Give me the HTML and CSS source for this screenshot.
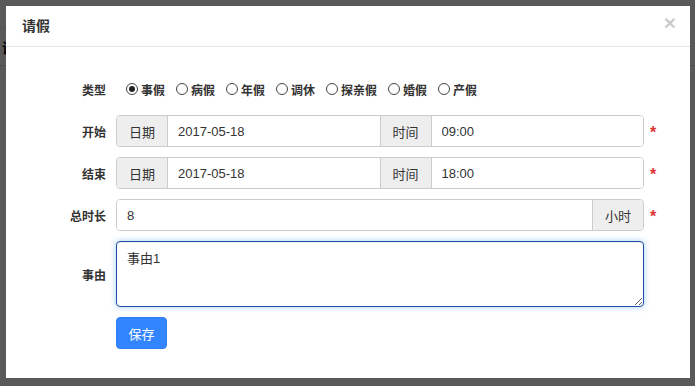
FILE: index.html
```html
<!DOCTYPE html>
<html>
  <head>
    <title>请假</title>
    <link rel="stylesheet" href="styles.css">
    <meta name="viewport" content="width=device-width, initial-scale=1" />
  </head>
  <body>
    <div class="page">
      <div class="page-bar"><span class="page-title">请假管理</span></div>
    </div>
    <div class="backdrop"></div>
    <div class="modal">
      <div class="modal-header">
        <h4 class="modal-title">请假</h4>
        <button type="button" class="close">&times;</button>
      </div>
      <div class="modal-body">
        <form class="form">
          <div class="row">
            <span class="label">类型</span>
            <div class="radios">
              <label class="radio"><input type="radio" name="type" checked />事假</label>
              <label class="radio"><input type="radio" name="type" />病假</label>
              <label class="radio"><input type="radio" name="type" />年假</label>
              <label class="radio"><input type="radio" name="type" />调休</label>
              <label class="radio"><input type="radio" name="type" />探亲假</label>
              <label class="radio"><input type="radio" name="type" />婚假</label>
              <label class="radio"><input type="radio" name="type" />产假</label>
            </div>
          </div>
          <div class="row">
            <span class="label">开始</span>
            <div class="group">
              <span class="addon">日期</span>
              <input class="input" type="text" value="2017-05-18" />
              <span class="addon addon-mid">时间</span>
              <input class="input" type="text" value="09:00" />
            </div>
            <span class="required">*</span>
          </div>
          <div class="row">
            <span class="label">结束</span>
            <div class="group">
              <span class="addon">日期</span>
              <input class="input" type="text" value="2017-05-18" />
              <span class="addon addon-mid">时间</span>
              <input class="input" type="text" value="18:00" />
            </div>
            <span class="required">*</span>
          </div>
          <div class="row">
            <span class="label">总时长</span>
            <div class="group">
              <input class="input" type="text" value="8" />
              <span class="addon addon-end">小时</span>
            </div>
            <span class="required">*</span>
          </div>
          <div class="row row-text">
            <span class="label">事由</span>
            <textarea class="textarea">事由1</textarea>
          </div>
          <div class="row">
            <span class="label"></span>
            <button type="button" class="btn">保存</button>
          </div>
        </form>
      </div>
    </div>
  </body>
</html>
```

FILE: styles.css
```css
body {margin: 0; background-color: #fff; font-family: "Liberation Sans", "Noto Sans CJK SC", sans-serif; color: #333;}
.page {height: 386px; padding-top: 27px; box-sizing: border-box; overflow: hidden;}
.page-bar {height: 37px; border-top: 1px solid #eee; border-bottom: 1px solid #ddd; display: flex; align-items: center;}
.page-title {padding-left: 2px; font-size: 14px; font-weight: bold; color: #000;}
.backdrop {position: fixed; left: 0; top: 0; right: 0; bottom: 0; background-color: rgba(0, 0, 0, 0.65);}
.modal {position: fixed; left: 6px; top: 6px; width: 684px; height: 372px; background-color: #fff;}
.modal-header {height: 40px; padding: 0 16px 0 16px; border-bottom: 1px solid #e5e5e5; display: flex; align-items: center; justify-content: space-between;}
.modal-title {margin: 0; font-size: 14px; font-weight: bold; line-height: 20px; color: #333;}
.close {border: 0; padding: 0; background: none; font-family: "Liberation Sans", sans-serif; font-size: 21px; font-weight: bold; line-height: 20px; color: #000; opacity: 0.2; margin-top: -6px; margin-right: -2px;}
.modal-body {padding-top: 26px;}
.row {display: flex; align-items: center; height: 32px; margin-bottom: 10px;}
.row-text {height: 66px; margin-bottom: 10px;}
.label {width: 100px; padding-right: 10px; text-align: right; font-size: 12px; font-weight: bold; flex-shrink: 0;}
.radios {display: flex; align-items: center; padding-left: 10px;}
.radio {display: flex; align-items: center; font-size: 12px; font-weight: bold; margin-right: 11px;}
.radio input {appearance: none; -webkit-appearance: none; margin: 0 3px 0 0; width: 12px; height: 12px; border: 1px solid #444; border-radius: 50%; background: #fff; display: grid; place-items: center;}
.radio input:checked::before {content: ""; width: 6px; height: 6px; border-radius: 50%; background: #222;}
.group {display: flex; width: 528px; height: 32px; box-sizing: border-box; border: 1px solid #ccc; border-radius: 4px; overflow: hidden;}
.addon {width: 50px; flex-shrink: 0; background-color: #eee; border-right: 1px solid #ccc; color: #333; font-size: 13px; display: flex; align-items: center; justify-content: center;}
.addon-mid {border-left: 1px solid #ccc;}
.addon-end {border-left: 1px solid #ccc; border-right: 0;}
.input {flex: 1; min-width: 0; border: 0; padding: 0 10px; font-family: "Liberation Sans", "Noto Sans CJK SC", sans-serif; font-size: 13px; color: #333; outline: none;}
.required {margin-left: 6px; color: #dd3333; font-size: 16px; font-weight: bold; line-height: 16px; padding-top: 4px;}
.textarea {width: 528px; height: 66px; box-sizing: border-box; border: 1px solid #1f4fa6; border-radius: 4px; padding: 6px 10px; font-family: "Liberation Sans", "Noto Sans CJK SC", sans-serif; font-size: 13px; color: #333; box-shadow: inset 0 1px 1px rgba(0, 0, 0, 0.075), 0 0 6px rgba(102, 175, 233, 0.6); outline: none;}
.btn {width: 51px; height: 32px; border: 1px solid #2e7ef0; border-radius: 4px; background-color: #3385ff; color: #fff; font-family: "Liberation Sans", "Noto Sans CJK SC", sans-serif; font-size: 13px; padding: 0;}
```
